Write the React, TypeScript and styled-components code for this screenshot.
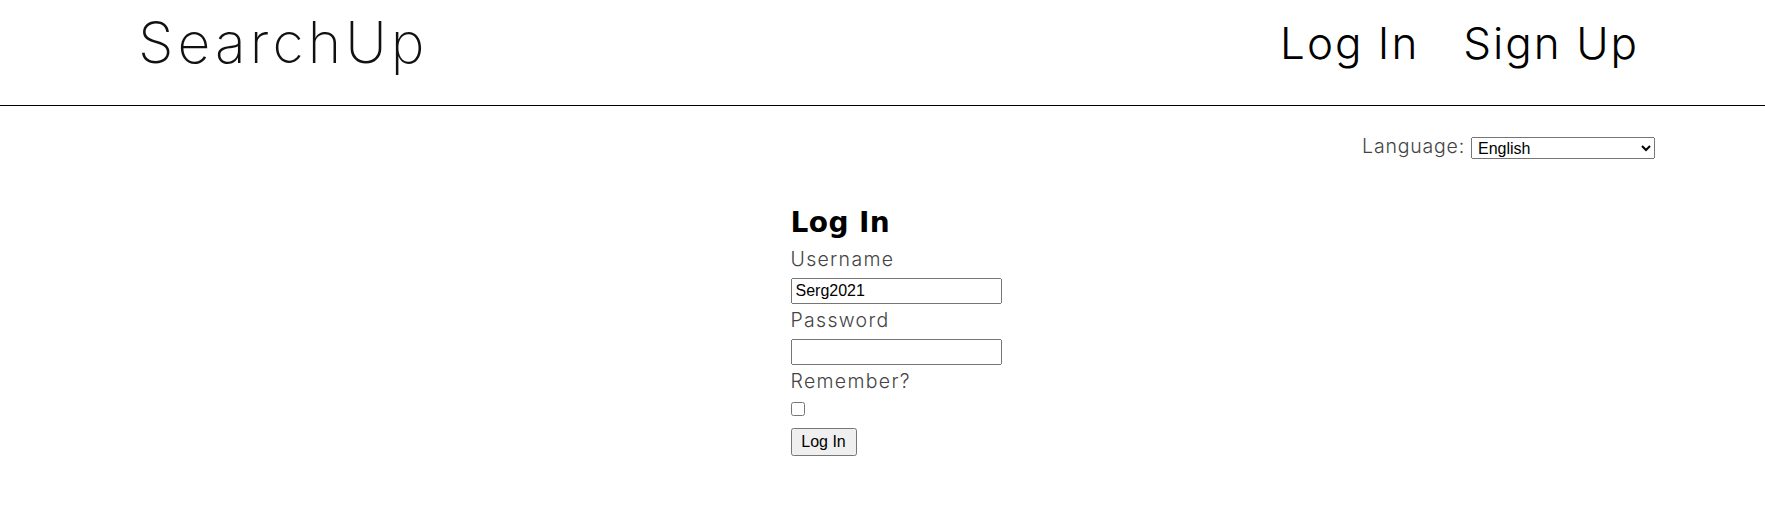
import React, { useState } from "react";
import styled, { createGlobalStyle } from "styled-components";

const GlobalStyle = createGlobalStyle`
  body {
    margin: 0;
    background: #ffffff;
    font-family: "Inter", "Liberation Sans", sans-serif;
  }
`;

const Header = styled.header`
  height: 106px;
  box-sizing: border-box;
  border-bottom: 1px solid #000;
  display: flex;
  align-items: center;
  justify-content: space-between;
  padding: 0 126px 20px 138px;
`;

const Logo = styled.div`
  font-size: 57px;
  font-weight: 200;
  line-height: 1;
  letter-spacing: 4.1px;
  color: #111;
`;

const Nav = styled.nav`
  display: flex;
  align-items: center;
  gap: 44px;
`;

const NavLink = styled.a`
  font-size: 44px;
  font-weight: 300;
  line-height: 1;
  letter-spacing: 2px;
  color: #000;
  text-decoration: none;
`;

const LanguageRow = styled.div`
  display: flex;
  justify-content: flex-end;
  align-items: center;
  gap: 6px;
  margin-top: 28px;
  padding-right: 110px;
`;

const Label = styled.label<{ $block?: boolean }>`
  display: ${(p) => (p.$block ? "block" : "inline-block")};
  font-size: 19.5px;
  font-weight: 300;
  line-height: 24px;
  letter-spacing: ${(p) => (p.$block ? "1.3px" : "0.8px")};
  color: #444;
  padding-bottom: ${(p) => (p.$block ? "0" : "4px")};
`;

const Select = styled.select`
  width: 184px;
  height: 22px;
  font-family: Arial, "Liberation Sans", sans-serif;
  font-size: 16px;
  padding: 0 2px;
`;

const Form = styled.form`
  margin: 45px 0 0 calc(50% - 92px);
  display: flex;
  flex-direction: column;
  align-items: flex-start;
`;

const Title = styled.h1`
  margin: 0 0 8px;
  font-family: "DejaVu Sans", sans-serif;
  font-weight: 700;
  font-size: 28px;
  line-height: 32px;
  letter-spacing: 0.4px;
  color: #000;
`;

const Field = styled.div`
  display: flex;
  flex-direction: column;
  align-items: flex-start;
  gap: 7px;
  margin-bottom: 4px;
`;

const TextInput = styled.input`
  width: 211px;
  height: 26px;
  box-sizing: border-box;
  margin: 0;
  padding: 0 3px;
  font-family: Arial, "Liberation Sans", sans-serif;
  font-size: 16px;
  color: #000;
`;

const Checkbox = styled.input`
  width: 14px;
  height: 14px;
  margin: 2px 0 0;
`;

const SubmitButton = styled.button`
  margin-top: 8px;
  width: 66px;
  height: 28px;
  padding: 0;
  font-family: Arial, "Liberation Sans", sans-serif;
  font-size: 16px;
  color: #000;
`;

const App: React.FC = () => {
  const [username, setUsername] = useState("Serg2021");
  const [password, setPassword] = useState("");
  const [remember, setRemember] = useState(false);

  return (
    <>
      <GlobalStyle />
      <Header>
        <Logo>SearchUp</Logo>
        <Nav>
          <NavLink href="#">Log In</NavLink>
          <NavLink href="#">Sign Up</NavLink>
        </Nav>
      </Header>
      <LanguageRow>
        <Label htmlFor="lang">Language:</Label>
        <Select id="lang" defaultValue="en">
          <option value="en">English</option>
          <option value="ru">Русский</option>
        </Select>
      </LanguageRow>
      <Form onSubmit={(e) => e.preventDefault()}>
        <Title>Log In</Title>
        <Field>
          <Label $block htmlFor="username">Username</Label>
          <TextInput
            id="username"
            type="text"
            value={username}
            onChange={(e) => setUsername(e.target.value)}
          />
        </Field>
        <Field>
          <Label $block htmlFor="password">Password</Label>
          <TextInput
            id="password"
            type="password"
            value={password}
            onChange={(e) => setPassword(e.target.value)}
          />
        </Field>
        <Field>
          <Label $block htmlFor="remember">Remember?</Label>
          <Checkbox
            id="remember"
            type="checkbox"
            checked={remember}
            onChange={(e) => setRemember(e.target.checked)}
          />
        </Field>
        <SubmitButton type="submit">Log In</SubmitButton>
      </Form>
    </>
  );
};

export default App;
